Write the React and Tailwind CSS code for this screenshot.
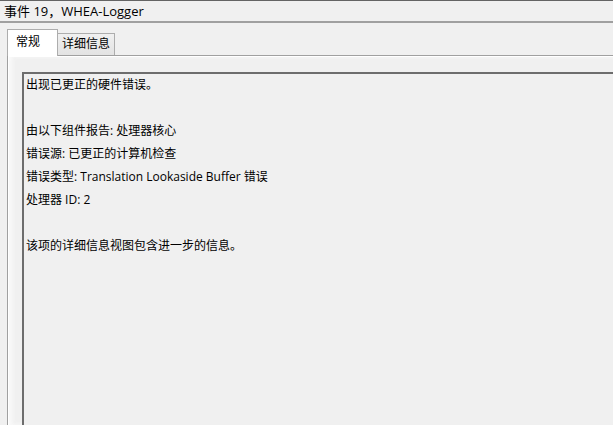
export default function App() {
  const font = { fontFamily: '"Open Sans", "Noto Sans CJK SC", sans-serif' };
  const lines = [
    '出现已更正的硬件错误。',
    '',
    '由以下组件报告: 处理器核心',
    '错误源: 已更正的计算机检查',
    '错误类型: Translation Lookaside Buffer 错误',
    '处理器 ID: 2',
    '',
    '该项的详细信息视图包含进一步的信息。',
  ];

  return (
    <div className="w-[613px] h-[425px] overflow-hidden bg-[#f0f0f0] text-black flex flex-col" style={font}>
      {/* Title */}
      <div className="h-[23px] shrink-0 border-t border-[#646464] border-b-2 border-b-[#a0a0a0] px-[4px] text-[13px] leading-[20px]">
        事件 19，WHEA-Logger
      </div>

      {/* Tabs */}
      <div className="pl-[7px] pt-[5px] flex items-end h-[32px] shrink-0">
        <div className="w-[51px] h-[27px] bg-white border border-b-0 border-[#adadad] text-[12px] leading-[24px] pl-[8px] relative z-10 -mb-px">
          常规
        </div>
        <div className="w-[57px] h-[22px] bg-gradient-to-b from-[#f0f0f0] to-[#e3e3e3] border border-l-0 border-b-0 border-[#adadad] text-[12px] leading-[20px] pl-[4px]">
          详细信息
        </div>
      </div>

      {/* Panel */}
      <div className="flex-1 ml-[7px] border-l border-t border-[#a0a0a0] bg-[#f0f0f0] shadow-[inset_1px_1px_0_#ffffff,inset_4px_0_4px_#fafafa] pl-[14px] pt-[16px] flex">
        <div className="flex-1 border-l-2 border-t-2 border-l-[#6d6d6d] border-t-[#6d6d6d] bg-[#f0f0f0] pl-[2px] text-[12px] leading-[22px]">
          {lines.map((l, i) => (
            <div key={i} className="h-[23px] whitespace-pre">{l}</div>
          ))}
        </div>
      </div>
    </div>
  );
}
